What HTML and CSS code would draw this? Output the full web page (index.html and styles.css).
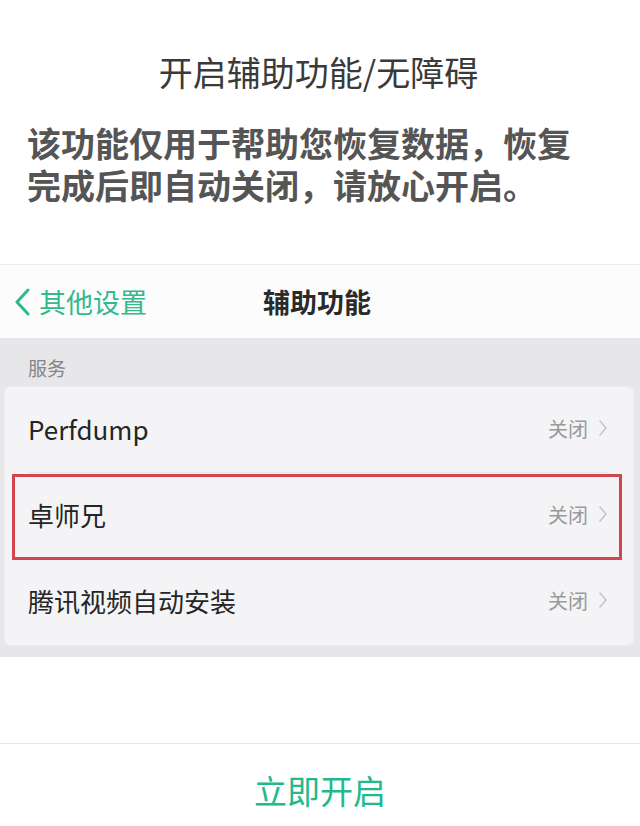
FILE: index.html
```html
<!DOCTYPE html>
<html lang="zh-CN">
<head>
<meta charset="utf-8">
<title>开启辅助功能</title>
<link rel="stylesheet" href="styles.css">
</head>
<body>
<div class="page">
  <section class="intro">
    <h1 class="intro-title">开启辅助功能/无障碍</h1>
    <p class="intro-text">该功能仅用于帮助您恢复数据，恢复完成后即自动关闭，请放心开启。</p>
  </section>

  <section class="shot">
    <header class="nav">
      <div class="nav-back">
        <svg class="nav-back-icon" width="20" height="28" viewBox="0 0 20 28"><polyline points="15,2 4,14 15,26" fill="none" stroke="#30b98a" stroke-width="3" stroke-linecap="round" stroke-linejoin="round"/></svg>
        <span>其他设置</span>
      </div>
      <div class="nav-title">辅助功能</div>
      <div class="nav-right"></div>
    </header>

    <div class="group">
      <div class="group-label">服务</div>
      <div class="card">
        <div class="row row-divided">
          <span class="row-name">Perfdump</span>
          <span class="row-value">关闭<svg class="chev" width="10" height="18" viewBox="0 0 10 18"><polyline points="2,2 8,9 2,16" fill="none" stroke="#c6c6c8" stroke-width="1.6" stroke-linecap="round" stroke-linejoin="round"/></svg></span>
        </div>
        <div class="row row-marked">
          <span class="row-name">卓师兄</span>
          <span class="row-value">关闭<svg class="chev" width="10" height="18" viewBox="0 0 10 18"><polyline points="2,2 8,9 2,16" fill="none" stroke="#c6c6c8" stroke-width="1.6" stroke-linecap="round" stroke-linejoin="round"/></svg></span>
        </div>
        <div class="row">
          <span class="row-name">腾讯视频自动安装</span>
          <span class="row-value">关闭<svg class="chev" width="10" height="18" viewBox="0 0 10 18"><polyline points="2,2 8,9 2,16" fill="none" stroke="#c6c6c8" stroke-width="1.6" stroke-linecap="round" stroke-linejoin="round"/></svg></span>
        </div>
      </div>
    </div>
  </section>

  <div class="spacer"></div>

  <footer class="action">
    <span class="action-btn">立即开启</span>
  </footer>
</div>
</body>
</html>
```

FILE: styles.css
```css
* { box-sizing: border-box; }

html, body {
  margin: 0;
  padding: 0;
  background: #ffffff;
}

body {
  font-family: "Noto Sans CJK SC", "Noto Sans", sans-serif;
}

.page {
  width: 640px;
  height: 826px;
  display: flex;
  flex-direction: column;
  overflow: hidden;
}

.intro {
  height: 264px;
  padding: 52px 40px 0 27px;
}

.intro-title {
  margin: 0;
  text-align: center;
  font-size: 34px;
  line-height: 40px;
  font-weight: 400;
  color: #3a3a3a;
  padding-left: 10px;
}

.intro-text {
  margin: 30px 0 0;
  font-size: 34px;
  line-height: 42px;
  font-weight: 700;
  color: #555555;
}

.shot {
  border-top: 1px solid #eeeeee;
}

.nav {
  height: 73px;
  background: #fcfcfc;
  display: grid;
  grid-template-columns: 1fr auto 1fr;
  align-items: center;
}

.nav-back {
  display: flex;
  align-items: center;
  padding-left: 13px;
  gap: 6px;
  color: #33b98b;
  font-size: 27px;
}

.nav-back-icon {
  display: block;
}

.nav-title {
  font-size: 27px;
  font-weight: 700;
  color: #2a2a2a;
  margin-left: -6px;
}

.group {
  background: #e7e7e9;
  padding: 0 7px 12px 5px;
}

.group-label {
  height: 49px;
  padding: 18px 0 0 23px;
  font-size: 19px;
  line-height: 24px;
  color: #858585;
}

.card {
  background: #f4f4f6;
  border-radius: 5px;
  box-shadow: 0 0 0 1px #ececee;
}

.row {
  position: relative;
  height: 86px;
  display: flex;
  align-items: center;
  justify-content: space-between;
  padding: 0 25px 4px 23px;
}

.row-divided::before {
  content: "";
  position: absolute;
  left: 23px;
  right: 25px;
  bottom: 0;
  height: 1px;
  background: #e9e9eb;
}

.row-marked::after {
  content: "";
  position: absolute;
  left: 7px;
  right: 11px;
  top: 1px;
  bottom: -1px;
  border: 3px solid #d2474d;
}

.row-name {
  font-size: 26px;
  color: #252525;
}

.row-value {
  display: flex;
  align-items: center;
  gap: 10px;
  font-size: 20px;
  color: #9a9a9a;
}

.chev {
  display: block;
}

.spacer {
  flex: 1;
}

.action {
  height: 83px;
  border-top: 1px solid #e6e6e6;
  display: flex;
  justify-content: center;
  align-items: center;
  padding-top: 10px;
}

.action-btn {
  font-size: 33px;
  color: #22b98b;
}
```
